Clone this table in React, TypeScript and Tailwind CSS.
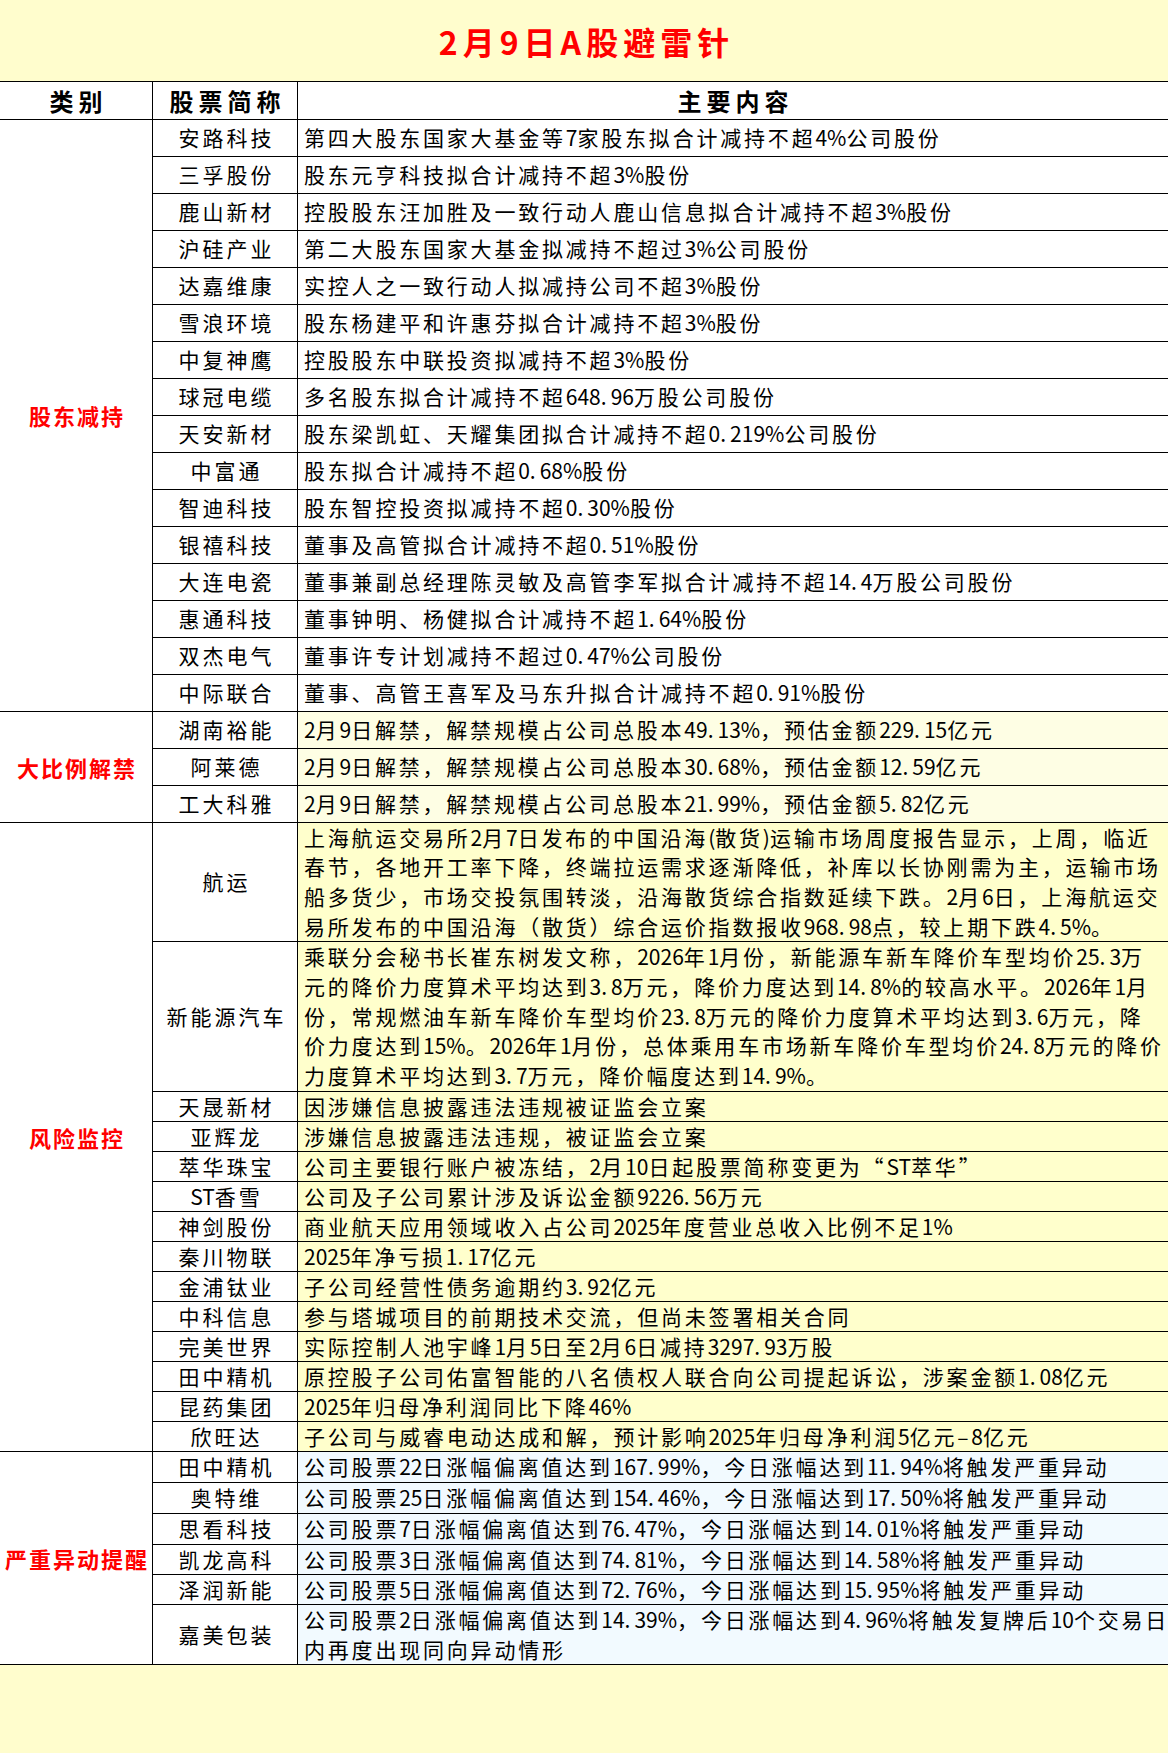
import React from "react";

function Ascii({ s }: { s: string }) {
  const parts = s.split(/(\.)/);
  return (
    <span className="tracking-normal">
      {parts.map((p, i) =>
        p === "." ? (
          <span key={i} className="tracking-[4px]">
            .
          </span>
        ) : (
          <React.Fragment key={i}>{p}</React.Fragment>
        )
      )}
    </span>
  );
}

function T({ s }: { s: string }) {
  const parts = s.split(/([\x20-\x7E]+)/);
  return (
    <>
      {parts.map((p, i) =>
        /^[\x20-\x7E]+$/.test(p) ? (
          <Ascii key={i} s={p} />
        ) : (
          <React.Fragment key={i}>{p}</React.Fragment>
        )
      )}
    </>
  );
}

type RowData = { name: string; lines: string[]; h: string };

function Row({ r, bg }: { r: RowData; bg: string }) {
  return (
    <div className={`flex border-b border-black ${r.h}`}>
      <div className="w-[145px] shrink-0 border-r border-black bg-white flex items-center justify-center">
        <span className="mr-[-3px] tracking-[3px] whitespace-nowrap">
          <T s={r.name} />
        </span>
      </div>
      <div className={`flex-1 min-w-0 flex flex-col justify-center pl-[6px] ${bg}`}>
        {r.lines.map((l, i) => (
          <div key={i} className="whitespace-nowrap leading-[29.75px]">
            <T s={l} />
          </div>
        ))}
      </div>
    </div>
  );
}

function Section({ label, rows, bg }: { label: string; rows: RowData[]; bg: string }) {
  return (
    <div className="flex">
      <div className="w-[153px] shrink-0 border-r border-b border-black bg-white flex items-center justify-center">
        <span className="text-[#ff0000] font-bold text-[22px] tracking-[2px] mr-[-2px] whitespace-nowrap">
          {label}
        </span>
      </div>
      <div className="flex-1 min-w-0 flex flex-col">
        {rows.map((r, i) => (
          <Row key={i} r={r} bg={bg} />
        ))}
      </div>
    </div>
  );
}

const s1: RowData[] = [
  ["安路科技", "第四大股东国家大基金等7家股东拟合计减持不超4%公司股份"],
  ["三孚股份", "股东元亨科技拟合计减持不超3%股份"],
  ["鹿山新材", "控股股东汪加胜及一致行动人鹿山信息拟合计减持不超3%股份"],
  ["沪硅产业", "第二大股东国家大基金拟减持不超过3%公司股份"],
  ["达嘉维康", "实控人之一致行动人拟减持公司不超3%股份"],
  ["雪浪环境", "股东杨建平和许惠芬拟合计减持不超3%股份"],
  ["中复神鹰", "控股股东中联投资拟减持不超3%股份"],
  ["球冠电缆", "多名股东拟合计减持不超648.96万股公司股份"],
  ["天安新材", "股东梁凯虹、天耀集团拟合计减持不超0.219%公司股份"],
  ["中富通", "股东拟合计减持不超0.68%股份"],
  ["智迪科技", "股东智控投资拟减持不超0.30%股份"],
  ["银禧科技", "董事及高管拟合计减持不超0.51%股份"],
  ["大连电瓷", "董事兼副总经理陈灵敏及高管李军拟合计减持不超14.4万股公司股份"],
  ["惠通科技", "董事钟明、杨健拟合计减持不超1.64%股份"],
  ["双杰电气", "董事许专计划减持不超过0.47%公司股份"],
  ["中际联合", "董事、高管王喜军及马东升拟合计减持不超0.91%股份"],
].map(([name, t]) => ({ name, lines: [t], h: "h-[37px]" }));

const s2: RowData[] = [
  ["湖南裕能", "2月9日解禁，解禁规模占公司总股本49.13%，预估金额229.15亿元"],
  ["阿莱德", "2月9日解禁，解禁规模占公司总股本30.68%，预估金额12.59亿元"],
  ["工大科雅", "2月9日解禁，解禁规模占公司总股本21.99%，预估金额5.82亿元"],
].map(([name, t]) => ({ name, lines: [t], h: "h-[37px]" }));

const s3: RowData[] = [
  {
    name: "航运",
    h: "h-[119px]",
    lines: [
      "上海航运交易所2月7日发布的中国沿海(散货)运输市场周度报告显示，上周，临近",
      "春节，各地开工率下降，终端拉运需求逐渐降低，补库以长协刚需为主，运输市场",
      "船多货少，市场交投氛围转淡，沿海散货综合指数延续下跌。2月6日，上海航运交",
      "易所发布的中国沿海（散货）综合运价指数报收968.98点，较上期下跌4.5%。",
    ],
  },
  {
    name: "新能源汽车",
    h: "h-[150px]",
    lines: [
      "乘联分会秘书长崔东树发文称，2026年1月份，新能源车新车降价车型均价25.3万",
      "元的降价力度算术平均达到3.8万元，降价力度达到14.8%的较高水平。2026年1月",
      "份，常规燃油车新车降价车型均价23.8万元的降价力度算术平均达到3.6万元，降",
      "价力度达到15%。2026年1月份，总体乘用车市场新车降价车型均价24.8万元的降价",
      "力度算术平均达到3.7万元，降价幅度达到14.9%。",
    ],
  },
  ...[
    ["天晟新材", "因涉嫌信息披露违法违规被证监会立案"],
    ["亚辉龙", "涉嫌信息披露违法违规，被证监会立案"],
    ["萃华珠宝", "公司主要银行账户被冻结，2月10日起股票简称变更为“ST萃华”"],
    ["ST香雪", "公司及子公司累计涉及诉讼金额9226.56万元"],
    ["神剑股份", "商业航天应用领域收入占公司2025年度营业总收入比例不足1%"],
    ["秦川物联", "2025年净亏损1.17亿元"],
    ["金浦钛业", "子公司经营性债务逾期约3.92亿元"],
    ["中科信息", "参与塔城项目的前期技术交流，但尚未签署相关合同"],
    ["完美世界", "实际控制人池宇峰1月5日至2月6日减持3297.93万股"],
    ["田中精机", "原控股子公司佑富智能的八名债权人联合向公司提起诉讼，涉案金额1.08亿元"],
    ["昆药集团", "2025年归母净利润同比下降46%"],
    ["欣旺达", "子公司与威睿电动达成和解，预计影响2025年归母净利润5亿元–8亿元"],
  ].map(([name, t]) => ({ name, lines: [t], h: "h-[30px]" })),
];

const s4: RowData[] = [
  { name: "田中精机", h: "h-[31px]", lines: ["公司股票22日涨幅偏离值达到167.99%，今日涨幅达到11.94%将触发严重异动"] },
  { name: "奥特维", h: "h-[31px]", lines: ["公司股票25日涨幅偏离值达到154.46%，今日涨幅达到17.50%将触发严重异动"] },
  { name: "思看科技", h: "h-[31px]", lines: ["公司股票7日涨幅偏离值达到76.47%，今日涨幅达到14.01%将触发严重异动"] },
  { name: "凯龙高科", h: "h-[30px]", lines: ["公司股票3日涨幅偏离值达到74.81%，今日涨幅达到14.58%将触发严重异动"] },
  { name: "泽润新能", h: "h-[30px]", lines: ["公司股票5日涨幅偏离值达到72.76%，今日涨幅达到15.95%将触发严重异动"] },
  {
    name: "嘉美包装",
    h: "h-[60px]",
    lines: [
      "公司股票2日涨幅偏离值达到14.39%，今日涨幅达到4.96%将触发复牌后10个交易日",
      "内再度出现同向异动情形",
    ],
  },
];

export default function App() {
  return (
    <div className="w-[1168px] min-h-[1753px] bg-[#fffdcd] text-black font-['Noto_Sans_CJK_SC','Noto_Sans',sans-serif] text-[21px] tracking-[2.8px] overflow-hidden">
      <div className="h-[82px] border-b border-black flex items-center justify-center">
        <h1 className="text-[#ff0000] text-[32px] font-bold tracking-[5px] mr-[-5px] leading-none">
          2月9日A股避雷针
        </h1>
      </div>
      <div className="h-[38px] flex border-b border-black bg-white font-bold text-[24px] tracking-[5px]">
        <div className="w-[153px] shrink-0 border-r border-black flex items-center justify-center">
          <span className="mr-[-5px]">类别</span>
        </div>
        <div className="w-[145px] shrink-0 border-r border-black flex items-center justify-center">
          <span className="mr-[-5px]">股票简称</span>
        </div>
        <div className="flex-1 flex items-center justify-center">
          <span className="mr-[-5px]">主要内容</span>
        </div>
      </div>
      <Section label="股东减持" rows={s1} bg="bg-white" />
      <Section label="大比例解禁" rows={s2} bg="bg-[#fefee4]" />
      <Section label="风险监控" rows={s3} bg="bg-[#ffffcc]" />
      <Section label="严重异动提醒" rows={s4} bg="bg-[#f2faff]" />
    </div>
  );
}
